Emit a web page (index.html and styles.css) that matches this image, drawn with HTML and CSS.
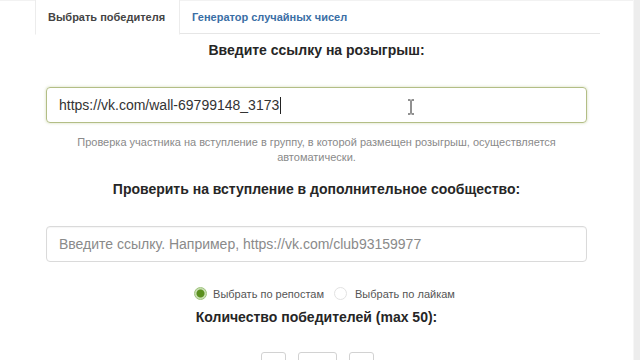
FILE: index.html
```html
<!DOCTYPE html>
<html lang="ru">
<head>
    <meta charset="UTF-8">
    <title>Выбрать победителя</title>
    <link rel="stylesheet" href="styles.css">
</head>
<body>
    <div class="page">
        <div class="main">
            <div class="container">
                <ul class="tabs">
                    <li class="tab active">Выбрать победителя</li>
                    <li class="tab">Генератор случайных чисел</li>
                </ul>
                <div class="form">
                    <h2 class="title">Введите ссылку на розыгрыш:</h2>
                    <div class="field focused">
                        <span class="value">https://vk.com/wall-69799148_3173</span><span class="caret"></span>
                        <svg class="ibeam" width="8" height="16" viewBox="0 0 8 16"><path d="M1 1h2.5M4.5 1H7M4 1.5v13M1 15h2.5M4.5 15H7" stroke="#222" stroke-width="1" fill="none"/></svg>
                    </div>
                    <p class="hint">Проверка участника на вступление в группу, в которой размещен розыгрыш, осуществляется автоматически.</p>
                    <h2 class="title second">Проверить на вступление в дополнительное сообщество:</h2>
                    <div class="field">
                        <span class="placeholder">Введите ссылку. Например, https://vk.com/club93159977</span>
                    </div>
                    <div class="radios">
                        <label class="radio"><span class="dot checked"></span>Выбрать по репостам</label>
                        <label class="radio"><span class="dot"></span>Выбрать по лайкам</label>
                    </div>
                    <h2 class="title third">Количество победителей (max 50):</h2>
                    <div class="counter">
                        <span class="box small"></span>
                        <span class="box wide"></span>
                        <span class="box small"></span>
                    </div>
                </div>
            </div>
        </div>
        <div class="scroll"></div>
    </div>
</body>
</html>
```

FILE: styles.css
```css
* { margin: 0; padding: 0; box-sizing: border-box; }
html, body { height: 100%; overflow: hidden; }
body { font-family: "Liberation Sans", Arial, sans-serif; background: #fff; color: #333; }
.page { display: flex; height: 100%; }
.main { flex: 1; border-top: 1px solid #f2f2f2; }
.scroll { width: 7px; background: #ededed; border-left: 1px solid #f6f6f6; }
.container { width: 565px; margin-left: 35px; }
.tabs { list-style: none; display: flex; border-bottom: 1px solid #e6e6e6; height: 34px; margin-top: -1px; }
.tab { padding: 0 14px 0 12px; font-size: 11px; font-weight: bold; line-height: 35px; color: #3a6ea5; }
.tab.active { color: #444; background: #fff; border: 1px solid #ececec; border-bottom-color: #fff; border-top: none; height: 35px; }
.form { padding: 0 13px 0 11px; text-align: center; }
.title { font-size: 14px; font-weight: bold; color: #262626; line-height: 18px; margin-top: 7px; }
.title.second { margin-top: 15px; }
.title.third { margin-top: 8px; }
.field { position: relative; height: 36px; margin-top: 28px; border: 1px solid #dadada; border-radius: 4px; text-align: left; padding: 0 12px; display: flex; align-items: center; font-size: 14px; box-shadow: inset 0 1px 1px rgba(0,0,0,0.04); }
.field.focused { border-color: #b3be86; box-shadow: 0 0 3px rgba(150,170,90,0.45); }
.value { color: #333; }
.caret { width: 1px; height: 17px; background: #222; margin-left: 1px; }
.placeholder { color: #8a8a8a; }
.ibeam { position: absolute; left: 360px; top: 11px; }
.hint { font-size: 11px; color: #8a8a8a; line-height: 15px; margin-top: 12px; padding: 0 20px; }
.radios { display: flex; justify-content: center; gap: 10px; margin-top: 25px; padding-left: 16px; font-size: 11px; color: #555; }
.radio { display: flex; align-items: center; gap: 6px; }
.radio + .radio { gap: 8px; }
.dot { width: 13px; height: 13px; border-radius: 50%; border: 1px solid #e2e2e2; background: #fff; }
.dot.checked { background: radial-gradient(circle, #5a8f1e 0 3.5px, #c9dfb3 4.5px 100%); border-color: #9ec47c; }
.counter { display: flex; justify-content: center; gap: 12px; margin-top: 26px; padding-left: 1px; }
.box { height: 26px; border: 1px solid #d2d2d2; border-radius: 3px; }
.box.small { width: 25px; }
.box.wide { width: 39px; }
```
